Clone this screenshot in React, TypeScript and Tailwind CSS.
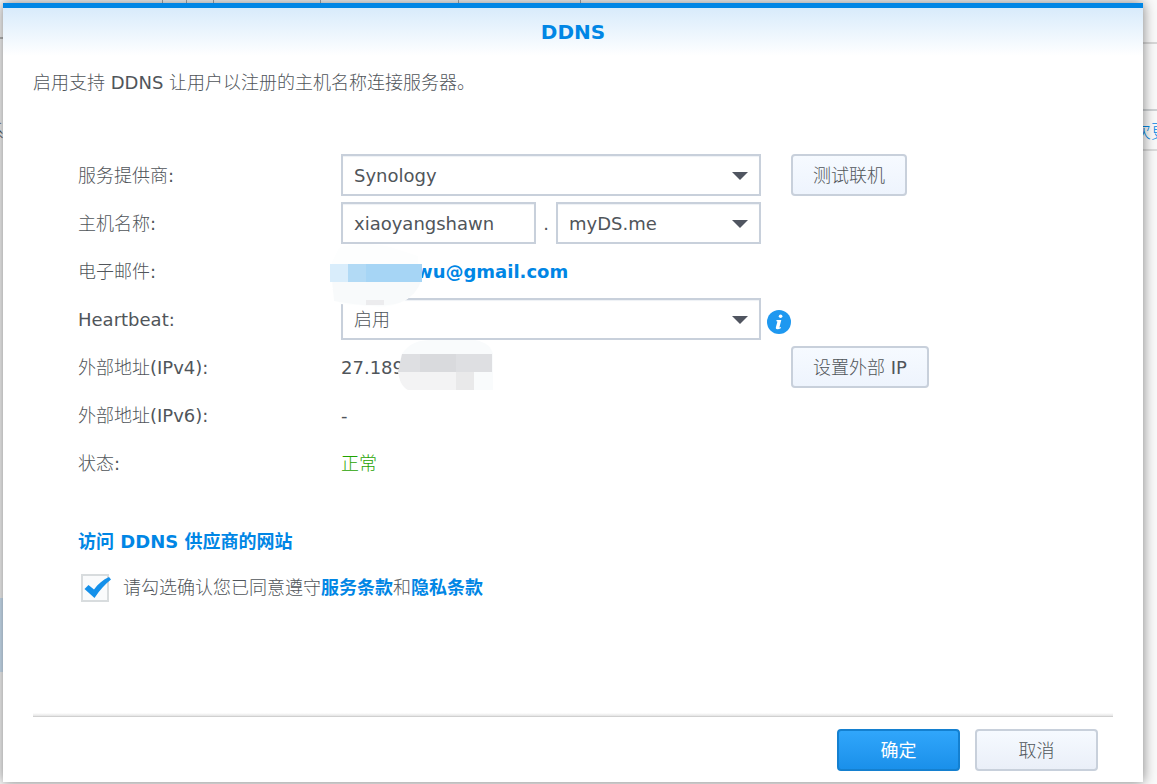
import { useState } from "react";
import type { ReactNode, SelectHTMLAttributes } from "react";

const columnRules = [
  "left-[162px]",
  "left-[186px]",
  "left-[213px]",
  "left-[320px]",
  "left-[458px]",
  "left-[580px]",
];

function Backdrop() {
  return (
    <div aria-hidden="true" className="absolute inset-0 overflow-hidden bg-[#fafafa] text-lg">
      {columnRules.map((left) => (
        <span key={left} className={`absolute top-0 h-1 w-px bg-[#a8acb0] ${left}`} />
      ))}
      <span className="absolute top-[42px] right-0 h-0.5 w-4 bg-[#d8d8d8]" />
      <span className="absolute top-[37px] left-0 h-0.5 w-1 bg-[#b8b8b8]" />
      <span className="absolute top-[109px] right-0 h-0.5 w-4 bg-[#cfd2d4]" />
      <span className="absolute top-[149px] right-0 h-0.5 w-4 bg-[#dcdcdc]" />
      <span className="absolute top-[598px] left-0 h-[74px] w-1 bg-[#d3e8fa]" />
      <span className="absolute top-[119px] -left-[14px] leading-[26px]">系</span>
      <span className="absolute top-[119px] -right-[12px] leading-[26px] whitespace-nowrap text-[#0086e5]">
        次更
      </span>
    </div>
  );
}

function Select({ className = "", children, ...rest }: SelectHTMLAttributes<HTMLSelectElement>) {
  return (
    <div className={`relative flex ${className}`}>
      <select
        {...rest}
        className="h-[42px] w-full appearance-none border-2 border-[#c8d0db] bg-white px-[11px] pt-0.5 text-[#50555a] shadow-[inset_0_1px_1px_#eef1f5] outline-none"
      >
        {children}
      </select>
      <svg
        className="pointer-events-none absolute top-[18px] right-[13px] h-2 w-4"
        viewBox="0 0 16 8"
        aria-hidden="true"
      >
        <path d="M0 0h16L8 8z" fill="#505560" />
      </svg>
    </div>
  );
}

function SideButton({ children }: { children: ReactNode }) {
  return (
    <button
      type="button"
      className="ml-[30px] h-[42px] rounded-sm border-2 border-[#c8d0db] bg-linear-to-b from-[#f6faff] to-[#eef4fd] px-5 pt-0.5"
    >
      {children}
    </button>
  );
}

function Row({ label, htmlFor, children }: { label: string; htmlFor?: string; children: ReactNode }) {
  return (
    <div className="flex h-12 items-center">
      {htmlFor ? (
        <label htmlFor={htmlFor} className="w-[263px] shrink-0 pt-0.5">
          {label}
        </label>
      ) : (
        <span className="w-[263px] shrink-0 pt-0.5">{label}</span>
      )}
      {children}
    </div>
  );
}

function EmailMask() {
  return (
    <svg className="absolute -top-[15px] -left-[11px] h-[66px] w-[93px]" viewBox="0 0 93 66" aria-hidden="true">
      <path d="M9 6C25 0 46 2 60 5l28 9v26C86 54 74 63 52 65L10 62 2 45V20z" fill="#fdfefe" />
      <path d="M2 36h90c-3 12-11 20-23 25-18 5-44 2-65-2z" fill="#f8fafb" />
      <path d="M36 58h18v5H36z" fill="#ececee" />
      <path d="M0 22h18v18H0z" fill="#d9edfb" />
      <path d="M18 22h18v18H18z" fill="#b2daf5" />
      <path d="M36 22h56v18H36z" fill="#a6d5f5" />
    </svg>
  );
}

function AddressMask() {
  return (
    <svg className="absolute -top-[13px] left-[56px] h-[50px] w-[98px]" viewBox="0 0 98 50" aria-hidden="true">
      <path d="M5 14C12 3 22 0 34 0h44c10 2 16 6 18 14v36H11L2 33z" fill="#f9fbfc" />
      <path d="M5 14h90v18H1z" fill="#dedfe2" />
      <path d="M23 14h36v18H23z" fill="#d9dadd" />
      <path d="M1 32h76v18H11C5 47 2 40 1 32z" fill="#f3f3f4" />
      <path d="M59 32h18v18H59z" fill="#e9e9ea" />
    </svg>
  );
}

function InfoIcon() {
  return (
    <svg className="h-6 w-6" viewBox="0 0 24 24" aria-hidden="true">
      <circle cx="12" cy="12" r="12" fill="#1e98f0" />
      <circle cx="13.6" cy="6.2" r="1.8" fill="#fff" />
      <path
        d="M9.6 10h4.7l-1.8 6.900c-.1.6.4.7 1.500.2l-.2 1.100c-1.400.9-2.600 1.200-3.600 1.100-1.200-.1-1.500-.9-1.300-2l1.400-5.400c.1-.6-.3-.6-1-.6z"
        fill="#fff"
      />
    </svg>
  );
}

export default function App() {
  const [agreed, setAgreed] = useState(true);
  const link = "font-['DejaVu_Sans','Noto_Sans_CJK_SC',sans-serif] font-bold text-[#0086e5]";

  return (
    <div className="relative flex min-h-screen pt-[3px] pr-[14px] pb-0.5 pl-[3px] font-['DejaVu_Sans','Noto_Sans_CJK_SC_Light','Noto_Sans_CJK_SC',sans-serif] text-lg leading-[26px] text-[#50555a]">
      <Backdrop />
      <main
        role="dialog"
        aria-labelledby="dialog-title"
        className="relative flex flex-1 flex-col border-t-[5px] border-[#0086e5] bg-white shadow-[0_0_12px_0_rgba(0,0,0,0.5)]"
      >
        <header className="flex h-12 items-center justify-center bg-linear-to-b from-[#d8ebfb] to-white">
          <h1 id="dialog-title" className="text-xl font-bold text-[#0086e5]">
            DDNS
          </h1>
        </header>

        <form className="flex flex-1 flex-col px-[30px]" onSubmit={(e) => e.preventDefault()}>
          <p className="mt-[14px]">启用支持 DDNS 让用户以注册的主机名称连接服务器。</p>

          <div className="mt-[55px] px-[45px]">
            <Row label="服务提供商:" htmlFor="provider">
              <Select id="provider" className="w-[420px]">
                <option>Synology</option>
              </Select>
              <SideButton>测试联机</SideButton>
            </Row>
            <Row label="主机名称:" htmlFor="hostname">
              <input
                id="hostname"
                defaultValue="xiaoyangshawn"
                className="h-[42px] w-[195px] border-2 border-[#c8d0db] bg-white px-[11px] shadow-[inset_0_1px_1px_#eef1f5] outline-none"
              />
              <span className="w-5 pt-0.5 text-center">.</span>
              <Select aria-label="域名" className="w-[205px]">
                <option>myDS.me</option>
              </Select>
            </Row>
            <Row label="电子邮件:">
              <div className="relative z-10 flex pt-0.5">
                <a href="#email" className={`pl-[75px] ${link}`}>
                  wu@gmail.com
                </a>
                <EmailMask />
              </div>
            </Row>
            <Row label="Heartbeat:" htmlFor="heartbeat">
              <Select id="heartbeat" className="w-[420px]">
                <option>启用</option>
              </Select>
              <button type="button" aria-label="Heartbeat" className="mt-1.5 ml-1.5">
                <InfoIcon />
              </button>
            </Row>
            <Row label="外部地址(IPv4):">
              <div className="relative w-[420px] pt-0.5">
                27.189
                <AddressMask />
              </div>
              <SideButton>设置外部 IP</SideButton>
            </Row>
            <Row label="外部地址(IPv6):">
              <span className="pt-0.5">-</span>
            </Row>
            <Row label="状态:">
              <span className="pt-0.5 text-[#1fa300]">正常</span>
            </Row>

            <a href="#provider-site" className={`mt-[42px] block w-fit ${link}`}>
              访问 DDNS 供应商的网站
            </a>
            <div className="mt-[19px] flex items-center gap-[14px] pl-[3px]">
              <span className="relative flex">
                <input
                  id="agree"
                  type="checkbox"
                  checked={agreed}
                  onChange={(e) => setAgreed(e.target.checked)}
                  className="h-7 w-7 appearance-none border-2 border-[#d8dcde] bg-[#fafbfc]"
                />
                {agreed && (
                  <svg
                    className="pointer-events-none absolute top-0 left-0 h-7 w-[30px]"
                    viewBox="0 0 30 28"
                    aria-hidden="true"
                  >
                    <path d="M3.500 15 7.500 11l5.500 4.500C17 10 22 5.500 28 3l2 2.500C24 10 19 16 13.500 24z" fill="#1490ea" />
                  </svg>
                )}
              </span>
              <label htmlFor="agree">
                请勾选确认您已同意遵守
                <a href="#terms" className={link}>
                  服务条款
                </a>
                和
                <a href="#privacy" className={link}>
                  隐私条款
                </a>
              </label>
            </div>
          </div>

          <footer className="mt-auto">
            <div className="h-1 border-b border-[#d0d0d0] bg-linear-to-b from-white to-[#e4e4e4]" />
            <div className="flex justify-end gap-[15px] pt-3 pr-[15px] pb-[11px]">
              <button
                type="submit"
                className="h-[42px] w-[123px] rounded-sm border-2 border-[#1480d0] bg-linear-to-b from-[#30a6fb] to-[#1a90ea] pt-0.5 font-['DejaVu_Sans','Noto_Sans_CJK_SC',sans-serif] text-white"
              >
                确定
              </button>
              <button
                type="button"
                className="h-[42px] w-[123px] rounded-sm border-2 border-[#c8d0db] bg-linear-to-b from-[#f6faff] to-[#eaeff8] pt-0.5"
              >
                取消
              </button>
            </div>
          </footer>
        </form>
      </main>
    </div>
  );
}
